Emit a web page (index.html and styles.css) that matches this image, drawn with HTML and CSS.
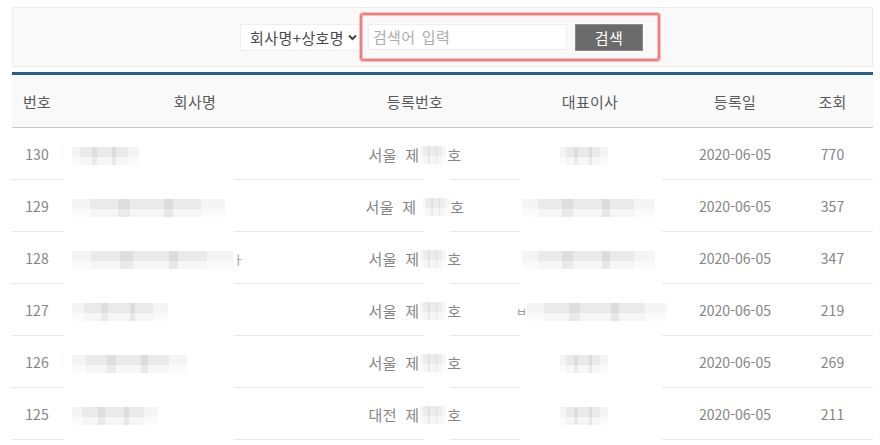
FILE: index.html
```html
<!DOCTYPE html>
<html lang="ko">
<head>
<meta charset="utf-8">
<title>목록</title>
<link rel="stylesheet" href="styles.css">
</head>
<body>
<div class="wrap">
  <form class="search-panel">
    <div class="search-group">
      <div class="select">회사명+상호명<svg class="chev" width="9" height="7" viewBox="0 0 9 7"><path d="M1 1.5 L4.5 5 L8 1.5" fill="none" stroke="#444" stroke-width="2"/></svg></div>
      <div class="highlight">
        <div class="input">검색어 입력</div>
        <div class="btn">검색</div>
      </div>
    </div>
  </form>
  <table class="list">
    <colgroup>
      <col class="c-no"><col class="c-name"><col class="c-reg"><col class="c-ceo"><col class="c-date"><col class="c-view">
    </colgroup>
    <thead>
      <tr><th>번호</th><th>회사명</th><th>등록번호</th><th>대표이사</th><th>등록일</th><th>조회</th></tr>
    </thead>
    <tbody>
      <tr>
        <td>130</td>
        <td class="name mask"><span class="blur" style="width:67px"></span></td>
        <td class="reg mask"><span class="ko">서울 제</span><span class="blur sm"></span><span class="ko">호</span></td>
        <td class="ceo mask"><span class="blur" style="width:48px;margin-left:38px"></span></td>
        <td>2020-06-05</td><td>770</td>
      </tr>
      <tr>
        <td>129</td>
        <td class="name mask"><span class="blur" style="width:153px"></span></td>
        <td class="reg mask"><span class="ko">서울 제</span><span class="blur sm gap"></span><span class="ko">호</span></td>
        <td class="ceo mask"><span class="blur" style="width:133px"></span></td>
        <td>2020-06-05</td><td>357</td>
      </tr>
      <tr>
        <td>128</td>
        <td class="name mask"><span class="blur" style="width:161px"></span><span class="frag">ㅏ</span></td>
        <td class="reg mask"><span class="ko">서울 제</span><span class="blur sm"></span><span class="ko">호</span></td>
        <td class="ceo mask"><span class="blur" style="width:133px"></span></td>
        <td>2020-06-05</td><td>347</td>
      </tr>
      <tr>
        <td>127</td>
        <td class="name mask"><span class="blur" style="width:96px"></span></td>
        <td class="reg mask"><span class="ko">서울 제</span><span class="blur sm"></span><span class="ko">호</span></td>
        <td class="ceo mask"><span class="frag lead">ㅂ</span><span class="blur" style="width:140px"></span></td>
        <td>2020-06-05</td><td>219</td>
      </tr>
      <tr>
        <td>126</td>
        <td class="name mask"><span class="blur" style="width:115px"></span></td>
        <td class="reg mask"><span class="ko">서울 제</span><span class="blur sm"></span><span class="ko">호</span></td>
        <td class="ceo mask"><span class="blur" style="width:48px;margin-left:38px"></span></td>
        <td>2020-06-05</td><td>269</td>
      </tr>
      <tr>
        <td>125</td>
        <td class="name mask"><span class="blur" style="width:86px"></span></td>
        <td class="reg mask"><span class="ko">대전 제</span><span class="blur sm"></span><span class="ko">호</span></td>
        <td class="ceo mask"><span class="blur" style="width:48px;margin-left:38px"></span></td>
        <td>2020-06-05</td><td>211</td>
      </tr>
    </tbody>
  </table>
</div>
</body>
</html>
```

FILE: styles.css
```css
* { box-sizing: border-box; }
html, body { margin: 0; background: #fff; }
body {
  font-family: "Noto Sans CJK KR", "Noto Sans", sans-serif;
  font-size: 14px;
  color: #808080;
}
.wrap { padding: 7px 7px 0 12px; }

.search-panel {
  height: 60px;
  margin: 0;
  background: #f9f9f9;
  border: 1px solid #ececec;
  display: flex;
  align-items: center;
  justify-content: center;
  padding-left: 15px;
}
.search-group { display: flex; align-items: center; }
.select {
  width: 120px;
  height: 27px;
  background: #fff;
  border: 1px solid #eee;
  color: #4a4a4a;
  font-size: 15px;
  letter-spacing: 0.4px;
  display: flex;
  align-items: center;
  justify-content: flex-end;
  gap: 4px;
  padding-right: 2px;
  line-height: 1;
}
.chev { display: block; margin-top: 1px; }
.highlight {
  width: 300px;
  height: 48px;
  border: 2px solid #ee7f7f;
  box-shadow: 0 0 0 1px #f6c0c0, inset 0 0 0 1px #f6c0c0;
  border-radius: 3px;
  display: flex;
  align-items: center;
  padding-left: 6px;
  gap: 8px;
}
.input {
  width: 199px;
  height: 26px;
  background: #fff;
  border: 1px solid #eee;
  color: #adadad;
  font-size: 15px;
  word-spacing: 2px;
  letter-spacing: 0.3px;
  line-height: 24px;
  padding-left: 4px;
}
.btn {
  width: 68px;
  height: 27px;
  background: #6b6b6b;
  border: 1px solid #8a8a8a;
  color: #fff;
  font-size: 15px;
  line-height: 25px;
  text-align: center;
  letter-spacing: 0.5px;
}

.list {
  width: 861px;
  margin-top: 5px;
  border-collapse: collapse;
  table-layout: fixed;
  border-top: 3px solid #2b5e87;
}
.c-no { width: 50px; }
.c-name { width: 266px; }
.c-reg { width: 174px; }
.c-ceo { width: 176px; }
.c-date { width: 114px; }
.c-view { width: 81px; }

.list th {
  height: 54px;
  background: #f9f9f9;
  border-bottom: 1px solid #c8c8c8;
  color: #5a5a5a;
  font-weight: 400;
  font-size: 15px;
  letter-spacing: 0.3px;
  text-align: center;
}
.list td {
  height: 52px;
  border-bottom: 1px solid #e6e6e6;
  text-align: center;
  color: #858585;
  font-size: 14px;
  white-space: nowrap;
  padding-top: 2px;
}
.ko { font-size: 15px; word-spacing: 4px; letter-spacing: 0.3px; }
.list td.name { text-align: left; padding-left: 10px; }
.list td.ceo { text-align: left; padding-left: 20px; }
.list td.reg { padding-left: 1px; }

.mask { position: relative; }
.mask > * { position: relative; z-index: 1; vertical-align: middle; }
.mask::after {
  content: "";
  position: absolute;
  bottom: -1px;
  height: 3px;
  background: #fff;
  z-index: 0;
}
.name::after { left: 1px; width: 171px; }
.reg::after { left: 96px; width: 26px; }
.ceo::after { left: 18px; width: 142px; }

.blur {
  display: inline-block;
  height: 18px;
  background-color: #eaeaea;
  background-image:
    linear-gradient(90deg, rgba(255,255,255,.5) 0 12%, transparent 12% 30%, rgba(0,0,0,.05) 30% 38%, transparent 38% 60%, rgba(0,0,0,.06) 60% 66%, transparent 66% 84%, rgba(255,255,255,.5) 84%),
    linear-gradient(180deg, transparent 0 55%, rgba(255,255,255,.55) 55%);
  filter: blur(0.6px);
}
.blur.sm { width: 26px; height: 18px; margin: 0 1px; background-color: #ececec; }
.blur.sm.gap { margin-left: 7px; }
.frag { color: #999; font-size: 12px; }
.frag.lead { margin-left: -6px; }
```
